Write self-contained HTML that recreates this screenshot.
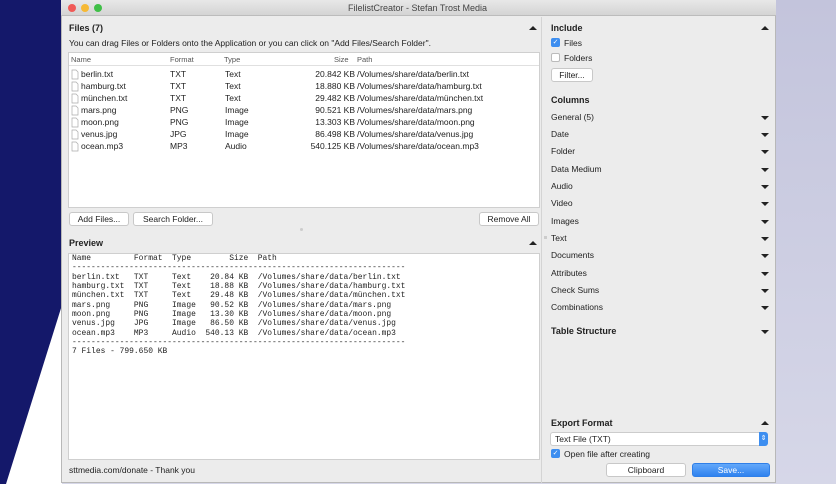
<!DOCTYPE html><html><head><meta charset="utf-8"><style>
*{margin:0;padding:0;box-sizing:border-box}
body{width:836px;height:484px;overflow:hidden;position:relative;font-family:"Liberation Sans",sans-serif;font-size:8.5px;color:#222;background:linear-gradient(#c3c4dc,#d6d7e8)}
.a{position:absolute;white-space:nowrap}
.b{font-weight:bold;font-size:9px}
.btn{position:absolute;background:#fff;border:1px solid #c8c8c8;border-radius:3px;text-align:center;height:14px;line-height:12px;font-size:8.5px}
.tri{position:absolute;width:0;height:0;border-left:4px solid transparent;border-right:4px solid transparent}
.dn{border-top:4px solid #222}.up{border-bottom:4px solid #222}
pre.a{font-family:"Liberation Mono",monospace;font-size:7.95px;line-height:9.33px;color:#222;white-space:pre}
.row{position:absolute;left:0;height:12px;line-height:12px}
</style></head><body>
<div class="a" style="left:0;top:0;width:61px;height:484px;background:#14186a"></div>
<svg class="a" style="left:0;top:0" width="62" height="484"><polygon points="62,305 62,484 6,484" fill="#fff"/></svg>
<div class="a" style="left:61px;top:0;width:715px;height:483px;background:#ececec;border:1px solid #b8b8b8"></div>
<div class="a" style="left:61px;top:0;width:715px;height:16px;background:linear-gradient(#e8e8e8,#d4d4d4);border-bottom:1px solid #bcbcbc"></div>
<div class="a" style="left:68px;top:4px;width:8px;height:8px;border-radius:50%;background:#f05a57"></div>
<div class="a" style="left:81px;top:4px;width:8px;height:8px;border-radius:50%;background:#f6b935"></div>
<div class="a" style="left:94px;top:4px;width:8px;height:8px;border-radius:50%;background:#3fbf47"></div>
<div class="a" style="left:348px;top:3px;font-size:9px;color:#444">FilelistCreator - Stefan Trost Media</div>
<div class="a" style="left:541px;top:17px;width:1px;height:466px;background:#d4d4d4"></div>

<div class="a b" style="left:69px;top:23px">Files (7)</div>
<div class="tri up" style="left:529px;top:26px"></div>
<div class="a" style="left:69px;top:38px">You can drag Files or Folders onto the Application or you can click on "Add Files/Search Folder".</div>
<div class="a" style="left:68px;top:52px;width:472px;height:156px;background:#fff;border:1px solid #cfcfcf"></div>
<div class="a" style="left:69px;top:53px;width:470px;height:13px;border-bottom:1px solid #e0e0e0;color:#555;font-size:7.5px;line-height:13px">
<span class="a" style="left:2px">Name</span><span class="a" style="left:101px">Format</span><span class="a" style="left:155px">Type</span><span class="a" style="left:265px">Size</span><span class="a" style="left:288px">Path</span></div>
<div class="a" style="left:69px;top:68px;width:470px;font-size:8.5px">
<div class="row" style="top:0"><span class="a" style="left:12px">berlin.txt</span><span class="a" style="left:101px">TXT</span><span class="a" style="left:156px">Text</span><span class="a" style="left:206px;width:80px;text-align:right">20.842 KB</span><span class="a" style="left:288px">/Volumes/share/data/berlin.txt</span></div>
<div class="row" style="top:12px"><span class="a" style="left:12px">hamburg.txt</span><span class="a" style="left:101px">TXT</span><span class="a" style="left:156px">Text</span><span class="a" style="left:206px;width:80px;text-align:right">18.880 KB</span><span class="a" style="left:288px">/Volumes/share/data/hamburg.txt</span></div>
<div class="row" style="top:24px"><span class="a" style="left:12px">münchen.txt</span><span class="a" style="left:101px">TXT</span><span class="a" style="left:156px">Text</span><span class="a" style="left:206px;width:80px;text-align:right">29.482 KB</span><span class="a" style="left:288px">/Volumes/share/data/münchen.txt</span></div>
<div class="row" style="top:36px"><span class="a" style="left:12px">mars.png</span><span class="a" style="left:101px">PNG</span><span class="a" style="left:156px">Image</span><span class="a" style="left:206px;width:80px;text-align:right">90.521 KB</span><span class="a" style="left:288px">/Volumes/share/data/mars.png</span></div>
<div class="row" style="top:48px"><span class="a" style="left:12px">moon.png</span><span class="a" style="left:101px">PNG</span><span class="a" style="left:156px">Image</span><span class="a" style="left:206px;width:80px;text-align:right">13.303 KB</span><span class="a" style="left:288px">/Volumes/share/data/moon.png</span></div>
<div class="row" style="top:60px"><span class="a" style="left:12px">venus.jpg</span><span class="a" style="left:101px">JPG</span><span class="a" style="left:156px">Image</span><span class="a" style="left:206px;width:80px;text-align:right">86.498 KB</span><span class="a" style="left:288px">/Volumes/share/data/venus.jpg</span></div>
<div class="row" style="top:72px"><span class="a" style="left:12px">ocean.mp3</span><span class="a" style="left:101px">MP3</span><span class="a" style="left:156px">Audio</span><span class="a" style="left:206px;width:80px;text-align:right">540.125 KB</span><span class="a" style="left:288px">/Volumes/share/data/ocean.mp3</span></div>
</div>
<svg class="a" style="left:71px;top:69px" width="8" height="84"><g fill="#fff" stroke="#aaa" stroke-width=".7"><path d="M1 1h4l2 2v7H1z"/><path d="M1 13h4l2 2v7H1z"/><path d="M1 25h4l2 2v7H1z"/><path d="M1 37h4l2 2v7H1z"/><path d="M1 49h4l2 2v7H1z"/><path d="M1 61h4l2 2v7H1z"/><path d="M1 73h4l2 2v7H1z"/></g></svg>

<div class="btn" style="left:69px;top:212px;width:60px">Add Files...</div>
<div class="btn" style="left:133px;top:212px;width:80px">Search Folder...</div>
<div class="btn" style="left:479px;top:212px;width:60px">Remove All</div>
<div class="a" style="left:300px;top:228px;width:3px;height:3px;background:#ccc;border-radius:50%"></div>
<div class="a b" style="left:69px;top:238px">Preview</div>
<div class="tri up" style="left:529px;top:241px"></div>
<div class="a" style="left:68px;top:253px;width:472px;height:207px;background:#fff;border:1px solid #cfcfcf"></div>
<pre class="a" style="left:72px;top:254px">Name         Format  Type        Size  Path
----------------------------------------------------------------------
berlin.txt   TXT     Text    20.84 KB  /Volumes/share/data/berlin.txt
hamburg.txt  TXT     Text    18.88 KB  /Volumes/share/data/hamburg.txt
münchen.txt  TXT     Text    29.48 KB  /Volumes/share/data/münchen.txt
mars.png     PNG     Image   90.52 KB  /Volumes/share/data/mars.png
moon.png     PNG     Image   13.30 KB  /Volumes/share/data/moon.png
venus.jpg    JPG     Image   86.50 KB  /Volumes/share/data/venus.jpg
ocean.mp3    MP3     Audio  540.13 KB  /Volumes/share/data/ocean.mp3
----------------------------------------------------------------------
7 Files - 799.650 KB</pre>
<div class="a" style="left:69px;top:465px">sttmedia.com/donate - Thank you</div>

<div class="a b" style="left:551px;top:23px">Include</div>
<div class="tri up" style="left:761px;top:26px"></div>
<div class="a" style="left:551px;top:38px;width:9px;height:9px;background:#3d8ef0;border-radius:2px;color:#fff;font-size:7px;line-height:9px;text-align:center">✓</div>
<div class="a" style="left:564px;top:38px">Files</div>
<div class="a" style="left:551px;top:53px;width:9px;height:9px;background:#fff;border:1px solid #bbb;border-radius:2px"></div>
<div class="a" style="left:564px;top:53px">Folders</div>
<div class="btn" style="left:551px;top:68px;width:42px">Filter...</div>
<div class="a b" style="left:551px;top:95px">Columns</div>
<div class="a" style="left:551px;top:112px">General (5)</div>
<div class="a" style="left:551px;top:129px">Date</div>
<div class="a" style="left:551px;top:146px">Folder</div>
<div class="a" style="left:551px;top:164px">Data Medium</div>
<div class="a" style="left:551px;top:181px">Audio</div>
<div class="a" style="left:551px;top:198px">Video</div>
<div class="a" style="left:551px;top:216px">Images</div>
<div class="a" style="left:551px;top:233px">Text</div>
<div class="a" style="left:544px;top:236px;width:3px;height:3px;background:#ccc"></div>
<div class="a" style="left:551px;top:250px">Documents</div>
<div class="a" style="left:551px;top:268px">Attributes</div>
<div class="a" style="left:551px;top:285px">Check Sums</div>
<div class="a" style="left:551px;top:302px">Combinations</div>
<div class="a b" style="left:551px;top:326px">Table Structure</div>
<div class="tri dn" style="left:761px;top:116px"></div>
<div class="tri dn" style="left:761px;top:133px"></div>
<div class="tri dn" style="left:761px;top:150px"></div>
<div class="tri dn" style="left:761px;top:168px"></div>
<div class="tri dn" style="left:761px;top:185px"></div>
<div class="tri dn" style="left:761px;top:202px"></div>
<div class="tri dn" style="left:761px;top:220px"></div>
<div class="tri dn" style="left:761px;top:237px"></div>
<div class="tri dn" style="left:761px;top:254px"></div>
<div class="tri dn" style="left:761px;top:272px"></div>
<div class="tri dn" style="left:761px;top:289px"></div>
<div class="tri dn" style="left:761px;top:306px"></div>
<div class="tri dn" style="left:761px;top:330px"></div>

<div class="a b" style="left:551px;top:418px">Export Format</div>
<div class="tri up" style="left:761px;top:421px"></div>
<div class="a" style="left:550px;top:432px;width:218px;height:14px;background:#fff;border:1px solid #ccc;border-radius:3px;padding-left:4px;line-height:12px">Text File (TXT)</div>
<div class="a" style="left:759px;top:432px;width:9px;height:14px;background:#3d8ef0;border-radius:0 3px 3px 0;color:#fff;font-size:7px;line-height:14px;text-align:center">⇕</div>
<div class="a" style="left:551px;top:449px;width:9px;height:9px;background:#3d8ef0;border-radius:2px;color:#fff;font-size:7px;line-height:9px;text-align:center">✓</div>
<div class="a" style="left:564px;top:449px">Open file after creating</div>
<div class="btn" style="left:606px;top:463px;width:80px">Clipboard</div>
<div class="btn" style="left:692px;top:463px;width:78px;background:linear-gradient(#63a8fa,#2f82ef);border-color:#2f7fe8;color:#fff">Save...</div>
</body></html>
